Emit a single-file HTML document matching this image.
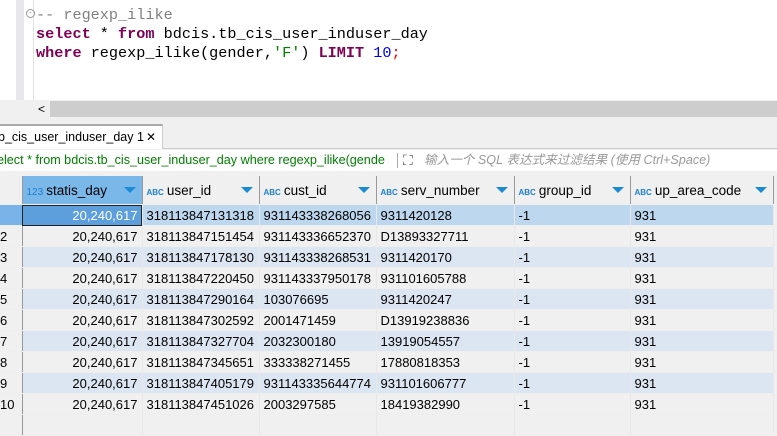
<!DOCTYPE html><html><head><style>
body{margin:0;width:777px;height:430px;overflow:hidden;background:#f0f0f0;font-family:"Liberation Sans","Noto Sans CJK SC",sans-serif;font-size:13px;position:relative}
.ed{position:absolute;left:0;top:0;width:777px;height:100px;background:#fff}
.gut{position:absolute;left:16px;top:0;width:8px;height:100px;background:#e8e8ec}
.gl{position:absolute;left:33px;top:0;width:1px;height:100px;background:#e0e0e0}
.code{position:absolute;left:36px;top:6px;font-family:"Liberation Mono",monospace;font-size:15.2px;line-height:19px;white-space:pre;color:#000}
.k{color:#7f0055;font-weight:bold}
.sb{position:absolute;left:0;top:100px;width:777px;height:18px;background:#f0f0f0}
.sbt{position:absolute;left:50px;top:101px;width:727px;height:16px;background:#cdcdcd}
.tab{position:absolute;left:0;top:124px;width:163px;height:25px;background:#fff;border-right:1px solid #ccc;border-top:2px solid #aaa;box-sizing:border-box;line-height:22px;white-space:nowrap;overflow:hidden;font-size:12.5px}
.tabline{position:absolute;left:0;top:148px;width:777px;height:1px;background:#ccc}
.flt{position:absolute;left:0;top:150px;width:777px;height:21px;background:#fff;line-height:21px;white-space:nowrap;font-size:12.6px}
table{position:absolute;left:0;top:176px;width:773px;border-collapse:collapse;table-layout:fixed;font-size:13px}
td,th{height:20px;padding:0 4px;border-right:1px solid #e8e8e8;border-bottom:1px solid #eee;white-space:nowrap;overflow:hidden;text-align:left;font-weight:normal}
th{height:28px;background:#f0f0f0;border-right:1px solid #999;position:relative;font-size:13.5px}
th .t{font-size:8px;color:#1b7fcf;font-weight:bold;margin-right:3px}
th .a{position:absolute;right:6px;top:11px;width:0;height:0;border-left:6px solid transparent;border-right:6px solid transparent;border-top:6px solid #1b8bd4}
td.n{background:#f0f0f0;border-right:1px solid #999;padding:0 2px 0 0;overflow:hidden}
td.r{text-align:right}
tr.alt td{background:#dce6f2}tr.alt td.n{background:#f0f0f0}
tr.sel td{background:#bdd7ee}tr.sel td.n{background:#7ab3e8}
</style></head><body>
<div class="ed"><div class="gut"></div><div class="gl"></div>
<div class="code"><span style="color:#808080">-- regexp_ilike</span>
<span class="k">select</span> * <span class="k">from</span> bdcis.tb_cis_user_induser_day
<span class="k">where</span> regexp_ilike(gender,<span style="color:#008000">'F'</span>) <span class="k">LIMIT</span> <span style="color:#0000ff">10</span><span style="color:#f00">;</span></div></div>
<div style="position:absolute;left:26px;top:9px;width:7px;height:7px;border:1px solid #999;border-radius:50%;font-size:7px;line-height:7px;text-align:center;color:#666">-</div>
<div class="sb"></div><div class="sbt"></div>
<div style="position:absolute;left:38px;top:102px;font-size:12px">&lt;</div>
<div class="tabline"></div>
<div class="tab"><span style="margin-left:-2px">b_cis_user_induser_day 1</span><span style="position:absolute;left:146px;top:0;font-size:12px">✕</span></div>
<div class="flt"><span style="color:#008000;position:absolute;left:-3px;width:396px;overflow:hidden">elect * from bdcis.tb_cis_user_induser_day where regexp_ilike(gende</span>
<span style="position:absolute;left:397px;top:3px;width:1px;height:15px;background:#aaa"></span>
<span style="position:absolute;left:403px;color:#555;font-size:14px">⛶</span>
<span style="position:absolute;left:424px;color:#999;font-style:italic">输入一个 SQL 表达式来过滤结果 (使用 Ctrl+Space)</span></div>
<table>
<colgroup><col style="width:22px"><col style="width:120px"><col style="width:117px"><col style="width:117px"><col style="width:138px"><col style="width:116px"><col style="width:143px"></colgroup>
<tr><th style="background:#f0f0f0;border-right:1px solid #999"></th><th style="background:#7ab8ea"><span class="t" style="font-weight:normal;font-size:10px">123</span>statis_day<span class="a"></span></th><th><span class="t">ABC</span>user_id<span class="a"></span></th><th><span class="t">ABC</span>cust_id<span class="a"></span></th><th><span class="t">ABC</span>serv_number<span class="a"></span></th><th><span class="t">ABC</span>group_id<span class="a"></span></th><th><span class="t">ABC</span>up_area_code<span class="a"></span></th></tr>
<tr class="sel"><td class="n"></td><td class="r" style="background:#5d9fdc;color:#fff;outline:1px solid #222;outline-offset:-1px">20,240,617</td><td>318113847131318</td><td>931143338268056</td><td>9311420128</td><td>-1</td><td>931</td></tr>
<tr><td class="n">2</td><td class="r">20,240,617</td><td>318113847151454</td><td>931143336652370</td><td>D13893327711</td><td>-1</td><td>931</td></tr>
<tr class="alt"><td class="n">3</td><td class="r">20,240,617</td><td>318113847178130</td><td>931143338268531</td><td>9311420170</td><td>-1</td><td>931</td></tr>
<tr><td class="n">4</td><td class="r">20,240,617</td><td>318113847220450</td><td>931143337950178</td><td>931101605788</td><td>-1</td><td>931</td></tr>
<tr class="alt"><td class="n">5</td><td class="r">20,240,617</td><td>318113847290164</td><td>103076695</td><td>9311420247</td><td>-1</td><td>931</td></tr>
<tr><td class="n">6</td><td class="r">20,240,617</td><td>318113847302592</td><td>2001471459</td><td>D13919238836</td><td>-1</td><td>931</td></tr>
<tr class="alt"><td class="n">7</td><td class="r">20,240,617</td><td>318113847327704</td><td>2032300180</td><td>13919054557</td><td>-1</td><td>931</td></tr>
<tr><td class="n">8</td><td class="r">20,240,617</td><td>318113847345651</td><td>333338271455</td><td>17880818353</td><td>-1</td><td>931</td></tr>
<tr class="alt"><td class="n">9</td><td class="r">20,240,617</td><td>318113847405179</td><td>931143335644774</td><td>931101606777</td><td>-1</td><td>931</td></tr>
<tr><td class="n">10</td><td class="r">20,240,617</td><td>318113847451026</td><td>2003297585</td><td>18419382990</td><td>-1</td><td>931</td></tr>
<tr><td class="n" style="height:20px"></td><td></td><td></td><td></td><td></td><td></td><td></td></tr>
</table>
</body></html>
